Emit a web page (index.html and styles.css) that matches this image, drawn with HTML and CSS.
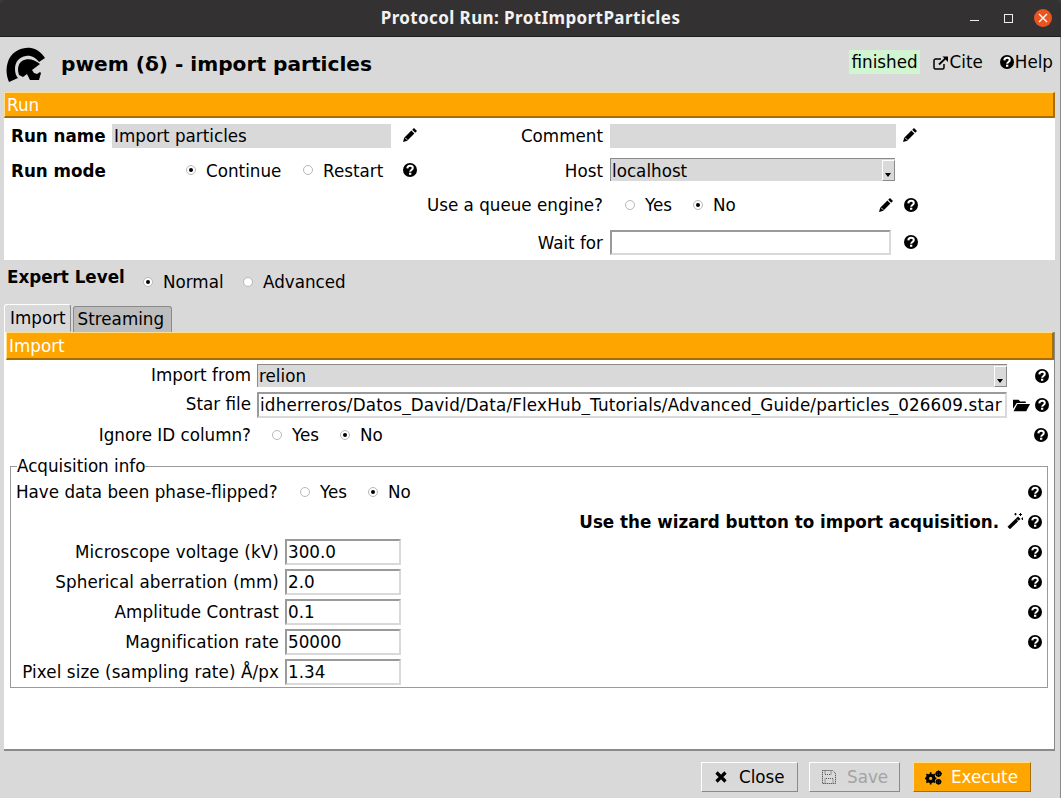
FILE: index.html
```html
<!DOCTYPE html>
<html lang="en">
<head>
    <meta charset="UTF-8">
    <meta name="viewport" content="width=device-width, initial-scale=1.0">
    <title>Protocol Run: ProtImportParticles</title>
    <link rel="stylesheet" href="styles.css">
</head>
<body>
    <!-- Icon sprites -->
    <svg class="sprites" width="0" height="0">
        <symbol id="i-help" viewBox="0 0 14 14">
            <circle cx="7" cy="7" r="7" fill="#000"/>
            <path d="M4.300 5.400C4.400 3.700 5.700 2.800 7.100 2.800c1.600 0 2.700 1 2.700 2.200 0 2-2.600 1.900-2.600 3.700" fill="none" stroke="#fff" stroke-width="2"/>
            <rect x="6" y="9.700" width="2.300" height="2.100" fill="#fff"/>
        </symbol>
        <symbol id="i-pencil" viewBox="0 0 14 14">
            <path d="M11 0l3 3-1.800 1.800-3-3zM8.400 2.600l3 3-7.200 7.200L0 14l1.200-4.200z" fill="#000"/>
            <path d="M2.200 9.800l2 2" stroke="#fff" stroke-width=".9"/>
        </symbol>
        <symbol id="i-wand" viewBox="0 0 16 16">
            <path d="M11 3.500L13.500 6 3 16.200.500 13.700z" fill="#000"/>
            <path d="M9.800 6.300l2.400 2.400" stroke="#fff" stroke-width=".9"/>
            <path d="M13.500 0v3M12 1.500h3M15.500 4.500v2.500M14.300 5.700h2.400M8.500 0v2.400M7.300 1.200h2.400" stroke="#000" stroke-width="1"/>
        </symbol>
        <symbol id="i-folder" viewBox="0 0 18 14">
            <path d="M0 1.500h6l1.500 1.700h6V5H4L0 11z" fill="#000"/>
            <path d="M4.600 6H18l-4 7.500H.6z" fill="#000"/>
        </symbol>
        <symbol id="i-external" viewBox="0 0 16 14">
            <path d="M11 8v3.500a1.500 1.500 0 0 1-1.500 1.500h-7A1.500 1.500 0 0 1 1 11.500v-7A1.500 1.500 0 0 1 2.500 3H8" fill="none" stroke="#000" stroke-width="1.500"/>
            <path d="M6 8.500L13 1.800" stroke="#000" stroke-width="1.800"/>
            <path d="M9.500 .5H15V6z" fill="#000"/>
        </symbol>
        <symbol id="i-close" viewBox="0 0 12 12">
            <path d="M1.500 1.500l9 9M10.500 1.500l-9 9" stroke="#000" stroke-width="3.200"/>
        </symbol>
        <symbol id="i-save" viewBox="0 0 14 14">
            <path d="M.5.5h10l3 3v10H.5z" fill="none" stroke="#333" stroke-dasharray="1 1"/>
            <path d="M3 .5v4h6v-4M3 13.500v-5h8v5" fill="none" stroke="#555" stroke-dasharray="1 1"/>
        </symbol>
        <symbol id="i-gears" viewBox="0 0 18 15">
            <circle cx="6" cy="8.500" r="3.800" fill="none" stroke="#000" stroke-width="2.600"/>
            <path d="M6 2v13M0 8.500h12M1.500 4l9 9M10.500 4l-9 9" stroke="#000" stroke-width="1.800"/>
            <circle cx="6" cy="8.500" r="1.700" fill="#ffa500"/>
            <circle cx="14.300" cy="3.500" r="2.300" fill="none" stroke="#000" stroke-width="1.800"/>
            <path d="M14.300 0v7M11 3.500h7" stroke="#000" stroke-width="1.200"/>
            <circle cx="14.300" cy="12" r="2.100" fill="none" stroke="#000" stroke-width="1.700"/>
            <path d="M14.300 9v6M11.300 12h6" stroke="#000" stroke-width="1.200"/>
        </symbol>
    </svg>

    <div class="window">
        <div class="titlebar">
            <span class="titlebar-text">Protocol Run: ProtImportParticles</span>
            <span class="win-min"></span>
            <span class="win-max"></span>
            <span class="win-close">
                <svg width="10" height="10" viewBox="0 0 10 10"><path d="M1 1l8 8M9 1l-8 8" stroke="#fff" stroke-width="1.300"/></svg>
            </span>
        </div>

        <div class="content">
            <header class="header">
                <svg class="logo" width="40" height="36" viewBox="0 0 40 36">
                    <path d="M3 35C0 28-.5 20 3 12 8 3 17 0 25 1c6 1 11 5 14 10l-6 4c-3-4-8-7-13-6-7 1-11 6-11 13 0 4 1 7 3 9z" fill="#000"/>
                    <path d="M13 28c-2-6-1-11 3-14 5-3 12-2 18 3l-4 3-4 3 2 3 3 1 3-2 1 1-2 7-9 0-3-6-4 3z" fill="#000"/>
                </svg>
                <h1 class="app-title">pwem (δ) - import particles</h1>
                <span class="status">finished</span>
                <span class="head-link"><svg class="icon-ext"><use href="#i-external"/></svg>Cite</span>
                <span class="head-link help-link"><svg class="icon"><use href="#i-help"/></svg>Help</span>
            </header>

            <section class="run-panel">
                <div class="bar">Run</div>
                <div class="run-row row-name">
                    <div class="run-left">
                        <b class="run-label name-label">Run name</b>
                        <span class="flat-input flat-name">Import particles</span>
                        <svg class="icon pencil-a"><use href="#i-pencil"/></svg>
                    </div>
                    <span class="right-label">Comment</span>
                    <span class="flat-input flat-comment"></span>
                    <svg class="icon pencil-b"><use href="#i-pencil"/></svg>
                </div>
                <div class="run-row row-mode">
                    <div class="run-left">
                        <b class="run-label mode-label">Run mode</b>
                        <span class="radio on"></span><span class="radio-text continue">Continue</span>
                        <span class="radio"></span><span class="radio-text restart">Restart</span>
                        <svg class="icon"><use href="#i-help"/></svg>
                    </div>
                    <span class="right-label">Host</span>
                    <div class="combo combo-host"><span class="combo-text">localhost</span><span class="combo-btn"></span></div>
                </div>
                <div class="run-row row-queue">
                    <div class="run-left"></div>
                    <span class="right-label">Use a queue engine?</span>
                    <span class="radio radio-yes"></span><span class="radio-text yes">Yes</span>
                    <span class="radio on"></span><span class="radio-text">No</span>
                    <svg class="icon pencil-c"><use href="#i-pencil"/></svg>
                    <svg class="icon help-c"><use href="#i-help"/></svg>
                </div>
                <div class="run-row row-wait">
                    <div class="run-left"></div>
                    <span class="right-label">Wait for</span>
                    <input class="entry entry-wait" type="text" value="">
                    <svg class="icon help-d"><use href="#i-help"/></svg>
                </div>
            </section>

            <div class="expert-row">
                <b class="expert-label">Expert Level</b>
                <span class="radio on"></span><span class="radio-text normal">Normal</span>
                <span class="radio"></span><span class="radio-text">Advanced</span>
            </div>

            <nav class="tabs">
                <span class="tab active">Import</span>
                <span class="tab">Streaming</span>
            </nav>

            <section class="form-panel">
                <div class="bar bar-import">Import</div>

                <div class="form-row row-from">
                    <span class="form-label">Import from</span>
                    <div class="combo combo-from"><span class="combo-text">relion</span><span class="combo-btn"></span></div>
                    <svg class="icon end-help"><use href="#i-help"/></svg>
                </div>
                <div class="form-row row-star">
                    <span class="form-label">Star file</span>
                    <input class="entry entry-star" type="text" value="idherreros/Datos_David/Data/FlexHub_Tutorials/Advanced_Guide/particles_026609.star">
                    <svg class="icon-folder"><use href="#i-folder"/></svg>
                    <svg class="icon star-help"><use href="#i-help"/></svg>
                </div>
                <div class="form-row row-ignore">
                    <span class="form-label">Ignore ID column?</span>
                    <span class="radio radio-ignore"></span><span class="radio-text yes">Yes</span>
                    <span class="radio on"></span><span class="radio-text">No</span>
                    <svg class="icon end-help"><use href="#i-help"/></svg>
                </div>

                <fieldset class="group">
                    <legend class="group-title">Acquisition info</legend>
                    <div class="group-row row-flip">
                        <span class="flip-label">Have data been phase-flipped?</span>
                        <span class="radio"></span><span class="radio-text yes">Yes</span>
                        <span class="radio on"></span><span class="radio-text">No</span>
                        <svg class="icon end-help"><use href="#i-help"/></svg>
                    </div>
                    <div class="group-row row-wizard">
                        <b class="wizard-text">Use the wizard button to import acquisition.</b>
                        <svg class="icon-wand"><use href="#i-wand"/></svg>
                        <svg class="icon wizard-help"><use href="#i-help"/></svg>
                    </div>
                    <div class="group-row">
                        <span class="group-label">Microscope voltage (kV)</span>
                        <input class="entry entry-small" type="text" value="300.0">
                        <svg class="icon end-help"><use href="#i-help"/></svg>
                    </div>
                    <div class="group-row">
                        <span class="group-label">Spherical aberration (mm)</span>
                        <input class="entry entry-small" type="text" value="2.0">
                        <svg class="icon end-help"><use href="#i-help"/></svg>
                    </div>
                    <div class="group-row">
                        <span class="group-label">Amplitude Contrast</span>
                        <input class="entry entry-small" type="text" value="0.1">
                        <svg class="icon end-help"><use href="#i-help"/></svg>
                    </div>
                    <div class="group-row">
                        <span class="group-label">Magnification rate</span>
                        <input class="entry entry-small" type="text" value="50000">
                        <svg class="icon end-help"><use href="#i-help"/></svg>
                    </div>
                    <div class="group-row">
                        <span class="group-label">Pixel size (sampling rate) Å/px</span>
                        <input class="entry entry-small" type="text" value="1.34">
                    </div>
                </fieldset>
            </section>

            <footer class="buttons">
                <button class="btn btn-close"><svg class="btn-icon"><use href="#i-close"/></svg>Close</button>
                <button class="btn btn-save"><svg class="btn-icon save-icon"><use href="#i-save"/></svg>Save</button>
                <button class="btn btn-exec"><svg class="gears-icon"><use href="#i-gears"/></svg>Execute</button>
            </footer>
        </div>
    </div>
</body>
</html>
```

FILE: styles.css
```css
* {
    box-sizing: border-box;
}

body {
    margin: 0;
    background-color: #3a3a3a;
    font-family: "DejaVu Sans", sans-serif;
    font-size: 16.75px;
    color: #000;
    overflow: hidden;
}

.sprites {
    position: absolute;
}

.window {
    width: 1061px;
    height: 798px;
    display: flex;
    flex-direction: column;
}

/* Window title bar */
.titlebar {
    height: 37px;
    flex: none;
    display: flex;
    align-items: center;
    position: relative;
    background-color: #333131;
    border-bottom: 1px solid #1e1e1e;
    border-radius: 6px 6px 0 0;
}

.titlebar-text {
    position: absolute;
    left: 0;
    right: 0;
    top: 7px;
    text-align: center;
    font-family: "Noto Sans", sans-serif;
    font-weight: 700;
    font-size: 17px;
    letter-spacing: 0.4px;
    line-height: 22px;
    color: #f2f2f2;
}

.win-min {
    position: absolute;
    left: 970px;
    top: 20px;
    width: 9px;
    height: 1px;
    background-color: #eee;
}

.win-max {
    position: absolute;
    left: 1004px;
    top: 14px;
    width: 9px;
    height: 9px;
    border: 1px solid #eee;
}

.win-close {
    position: absolute;
    left: 1034px;
    top: 9px;
    width: 18px;
    height: 18px;
    border-radius: 50%;
    background-color: #e95420;
    display: flex;
    align-items: center;
    justify-content: center;
}

.content {
    flex: 1;
    background-color: #d9d9d9;
    border-right: 1px solid #8a8a8a;
    padding: 0 4px 0 4px;
    display: flex;
    flex-direction: column;
}

/* Header */
.header {
    height: 55px;
    display: flex;
    align-items: flex-start;
}

.logo {
    margin: 10px 0 0 2px;
}

.app-title {
    margin: 14px 0 0 15px;
    font-size: 20.15px;
    line-height: 27px;
    font-weight: 700;
    flex: 1;
}

.status {
    margin-top: 13px;
    height: 24px;
    line-height: 24px;
    padding: 0 2px;
    background-color: #d0f5d0;
}

.head-link {
    margin: 13px 0 0 13px;
    height: 24px;
    line-height: 24px;
    display: flex;
    align-items: center;
}

.help-link {
    margin-left: 17px;
    margin-right: 3px;
}

.icon {
    width: 14px;
    height: 14px;
    flex: none;
}

.icon-ext {
    width: 16px;
    height: 14px;
    margin-top: 1px;
    margin-right: 1px;
}

.help-link .icon {
    margin-right: 1px;
}

/* Orange section bars */
.bar {
    height: 26px;
    line-height: 25px;
    padding-left: 2px;
    color: #fff;
    background-color: #ffa500;
    border-style: solid;
    border-width: 1px 2px 2px 1px;
    border-color: #ffe08a #a86d00 #a86d00 #ffe08a;
}

.bar-import {
    height: 28px;
    line-height: 27px;
    margin: 0 0 0 2px;
}

/* Run panel */
.run-panel {
    height: 168px;
    width: 1051px;
    background-color: #fff;
}

.run-row {
    display: flex;
    align-items: center;
}

.row-name {
    height: 24px;
    margin-top: 6px;
}

.row-mode {
    height: 23px;
    margin-top: 10px;
}

.row-mode .run-label,
.row-mode .radio-text,
.row-mode .right-label {
    padding-top: 2px;
}

.row-queue {
    height: 24px;
    margin-top: 12px;
}

.row-wait {
    height: 25px;
    margin-top: 13px;
}

.run-left {
    width: 420px;
    flex: none;
    display: flex;
    align-items: center;
    padding-left: 7px;
}

.run-label {
    flex: none;
    font-weight: 700;
}

.name-label {
    width: 101px;
}

.mode-label {
    width: 175px;
}

.right-label {
    width: 179px;
    flex: none;
    display: flex;
    justify-content: flex-end;
    margin-right: 7px;
    white-space: nowrap;
}

.flat-input {
    height: 24px;
    line-height: 24px;
    padding-left: 2px;
    background-color: #d9d9d9;
}

.flat-name {
    width: 279px;
}

.flat-comment {
    width: 286px;
}

.pencil-a {
    margin: -2px 0 0 12px;
}

.pencil-b {
    margin: -2px 0 0 7px;
}

.pencil-c {
    margin-left: 143px;
}

.help-c {
    margin-left: 11px;
}

.help-d {
    margin: -2px 0 0 13px;
}

/* Radios */
.radio {
    width: 10px;
    height: 10px;
    flex: none;
    border-radius: 50%;
    background-color: #fff;
    border: 1px solid #b8b8b8;
    display: flex;
    align-items: center;
    justify-content: center;
}

.radio.on::after {
    content: "";
    width: 4px;
    height: 4px;
    border-radius: 50%;
    background-color: #000;
}

.radio-text {
    margin-left: 10px;
}

.continue {
    width: 97px;
}

.restart {
    width: 80px;
}

.radio-yes {
    margin-left: 15px;
}

.yes {
    width: 48px;
}

/* Combobox and entries */
.combo {
    display: flex;
    height: 23px;
    background-color: #d9d9d9;
    border-top: 1px solid #8a8a8a;
    border-left: 1px solid #8a8a8a;
}

.combo-text {
    flex: 1;
    padding-left: 1px;
    line-height: 22px;
}

.combo-btn {
    width: 13px;
    margin-top: 1px;
    position: relative;
    background-color: #d9d9d9;
    border-style: solid;
    border-width: 1px;
    border-color: #fff #8a8a8a #8a8a8a #fff;
}

.combo-btn::after {
    content: "";
    position: absolute;
    left: 2px;
    bottom: 3px;
    border-style: solid;
    border-width: 4px 3.500px 0;
    border-color: #000 transparent transparent;
}

.combo-host {
    width: 285px;
}

.combo-host .combo-text {
    line-height: 24px;
}

.entry {
    height: 26px;
    padding: 0 0 0 1px;
    margin: 0;
    background-color: #fff;
    color: #000;
    font-family: inherit;
    font-size: 16.75px;
    outline: none;
    border-style: solid;
    border-width: 2px;
    border-color: #9a9a9a #d9d9d9 #d9d9d9 #9a9a9a;
}

.entry-wait {
    width: 281px;
    height: 25px;
}

.entry-star {
    width: 750px;
    letter-spacing: 0.17px;
}

.entry-small {
    width: 116px;
}

/* Expert level */
.expert-row {
    height: 44px;
    display: flex;
    align-items: center;
    padding-top: 0;
}

.expert-label {
    width: 139px;
    padding-left: 3px;
    margin-top: -10px;
    font-weight: 700;
    flex: none;
}

.normal {
    width: 80px;
}

/* Tabs */
.tabs {
    height: 28px;
    display: flex;
    align-items: flex-end;
}

.tab {
    height: 26px;
    line-height: 25px;
    padding: 0 7px 0 4px;
    margin-right: 2px;
    background-color: #bdbdbd;
    border: 1px solid #8a8a8a;
    border-bottom: none;
    border-radius: 3px 3px 0 0;
}

.tab.active {
    height: 28px;
    background-color: #d9d9d9;
    line-height: 27px;
    padding: 0 4px 0 5px;
    border-color: #fff #8a8a8a #d9d9d9 #fff;
    border-style: solid;
    border-width: 1px;
}

/* Protocol form */
.form-panel {
    height: 419px;
    width: 1051px;
    background-color: #fff;
    border-right: 1px solid #8a8a8a;
    border-bottom: 2px solid #8a8a8a;
    position: relative;
}

.form-row {
    display: flex;
    align-items: center;
}

.row-from {
    height: 23px;
    margin-top: 4px;
}

.row-star {
    height: 26px;
    margin-top: 5px;
}

.row-ignore {
    height: 26px;
    margin-top: 4px;
}

.form-label {
    width: 247px;
    flex: none;
    text-align: right;
    margin-right: 6px;
}

.row-from .form-label,
.row-star .form-label {
    margin-top: -2px;
}

.combo-from {
    width: 750px;
}

.row-from .end-help {
    margin-left: 28px;
}

.icon-folder {
    width: 17px;
    height: 14px;
    margin-left: 6px;
    flex: none;
}

.star-help {
    margin-left: 5px;
}

.radio-ignore {
    margin-left: 15px;
}

.row-ignore .end-help {
    margin-left: auto;
    margin-right: 6px;
}

/* Acquisition group */
.group {
    margin: 9px 6px 0 6px;
    padding: 0 0 0 5px;
    height: 231px;
    border: 1px solid #9a9a9a;
    min-width: 0;
}

.group-title {
    padding: 0;
    margin-left: 1px;
    height: 19px;
    line-height: 19px;
}

.group-row {
    display: flex;
    align-items: center;
    height: 26px;
    margin-bottom: 4px;
}

.row-flip {
    margin-top: 3px;
    height: 26px;
}

.row-wizard {
    margin-top: 2px;
    height: 26px;
}

.flip-label {
    width: 284px;
    flex: none;
}

.group-row .end-help {
    margin-left: auto;
    margin-right: 5px;
}

.wizard-text {
    margin-left: auto;
    font-weight: 700;
}

.icon-wand {
    width: 16px;
    height: 16px;
    margin: -2px 0 0 8px;
    flex: none;
}

.wizard-help {
    margin-left: 5px;
    margin-right: 5px;
}

.group-label {
    width: 263px;
    flex: none;
    text-align: right;
    margin-right: 6px;
    white-space: nowrap;
    letter-spacing: 0.1px;
}

/* Bottom buttons */
.buttons {
    flex: 1;
    display: flex;
    align-items: flex-start;
    padding: 11px 0 0 697px;
}

.btn {
    height: 30px;
    padding: 0;
    display: flex;
    align-items: center;
    background-color: #d9d9d9;
    font-family: inherit;
    font-size: 16.75px;
    color: #000;
    border-style: solid;
    border-width: 1px;
    border-color: #fff #8a8a8a #8a8a8a #fff;
}

.btn-close {
    width: 97px;
    padding-left: 13px;
}

.btn-save {
    width: 91px;
    padding-left: 12px;
    margin-left: 11px;
    color: #a3a3a3;
}

.btn-exec {
    width: 118px;
    padding-left: 11px;
    margin-left: 13px;
    color: #fff;
    background-color: #ffa500;
    border-color: #ffe08a #a86d00 #a86d00 #ffe08a;
}

.btn-icon {
    width: 12px;
    height: 12px;
    margin-right: 12px;
}

.save-icon {
    width: 14px;
    height: 14px;
    margin-right: 11px;
}

.gears-icon {
    width: 17px;
    height: 15px;
    margin-right: 9px;
}
```
